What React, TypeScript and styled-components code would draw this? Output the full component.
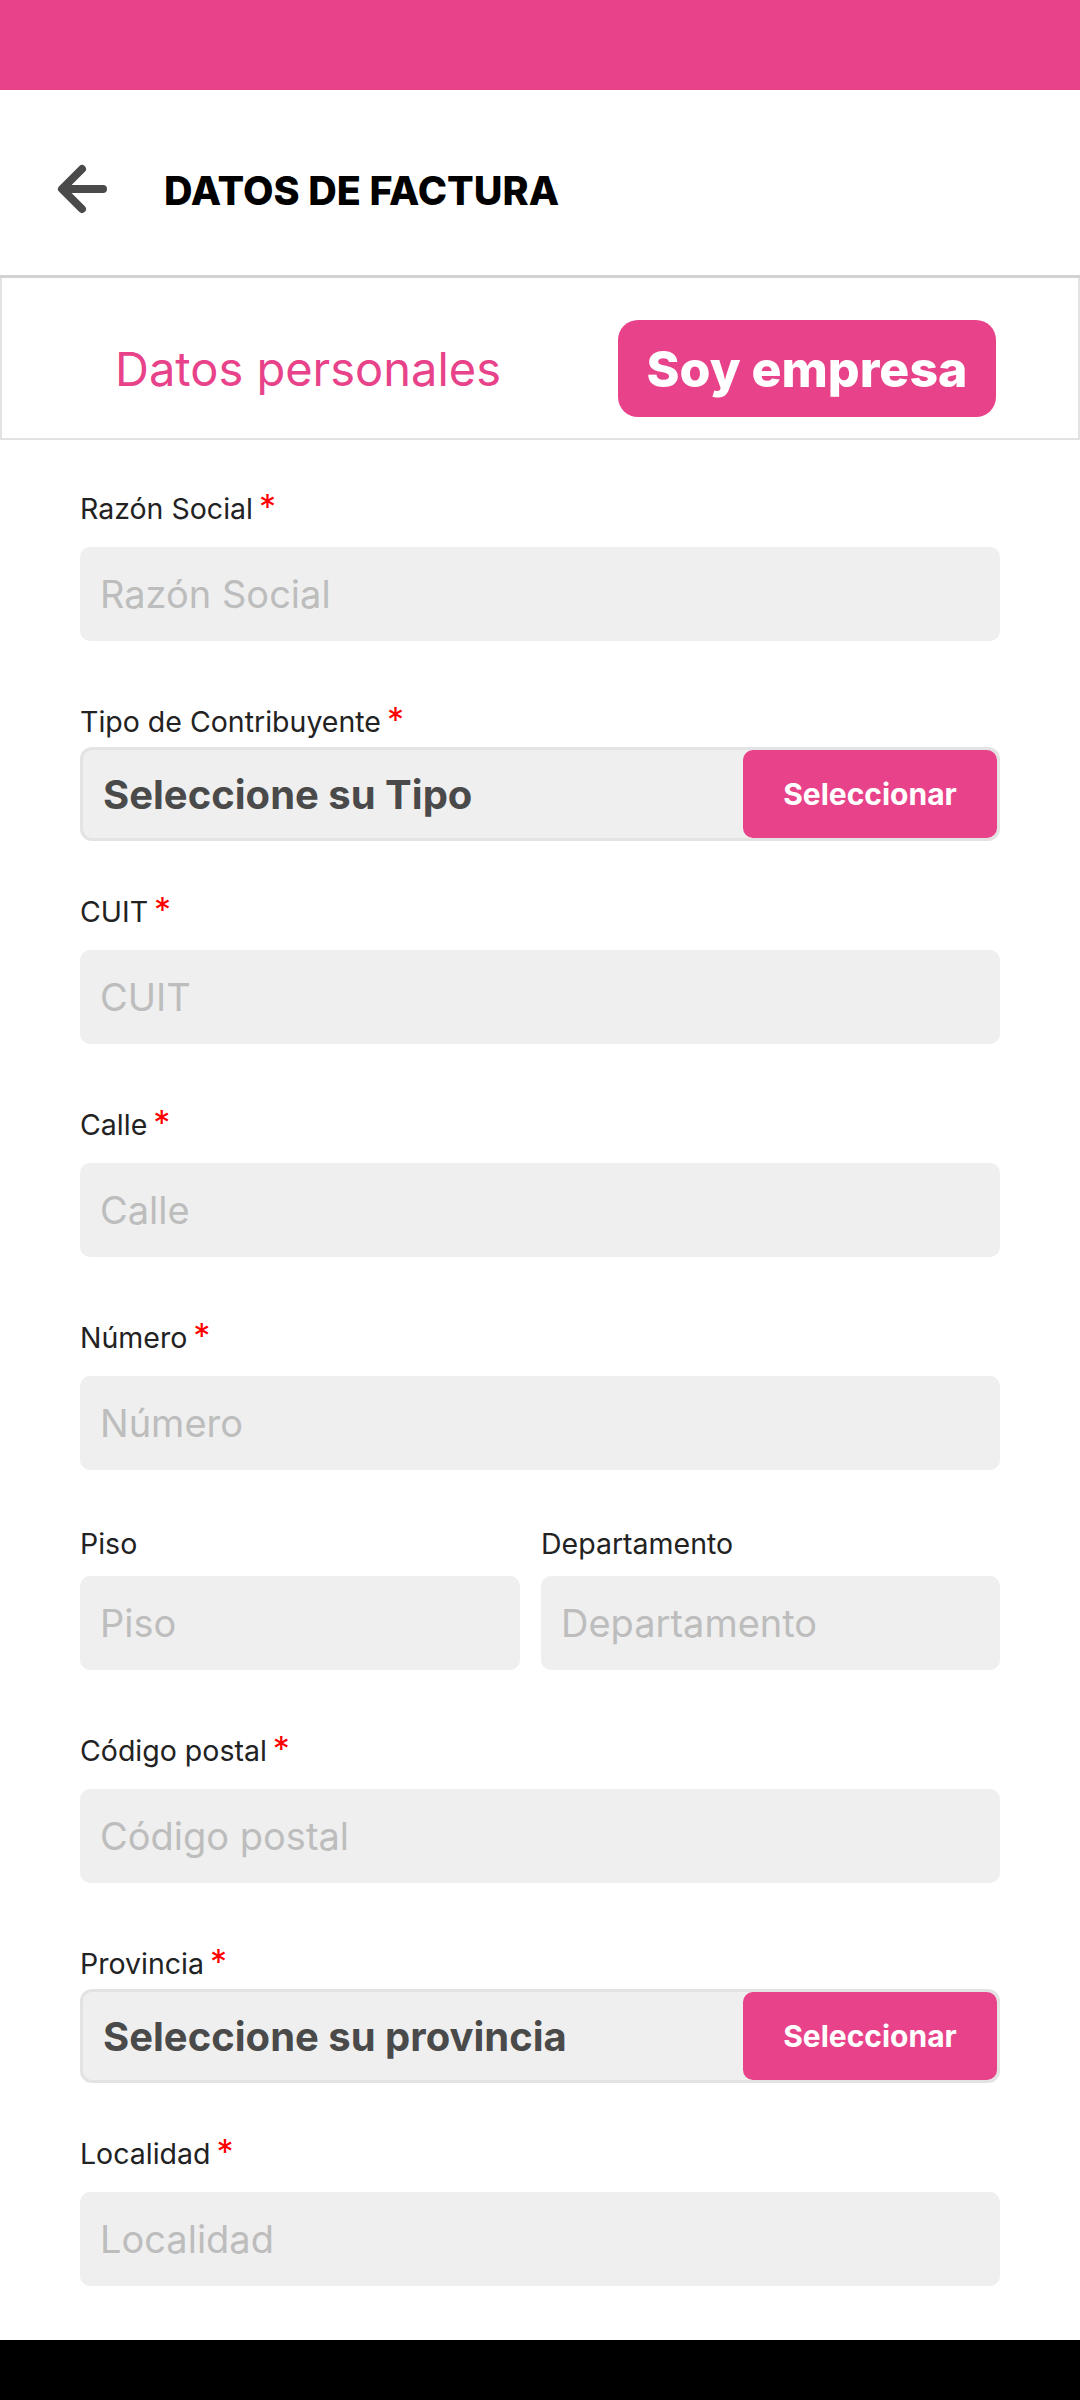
import React from "react";
import styled, { createGlobalStyle } from "styled-components";

const PINK = "#E8438A";

const GlobalStyle = createGlobalStyle`
  html, body {
    margin: 0;
    padding: 0;
    background: #ffffff;
    font-family: Inter, "Open Sans", sans-serif;
  }
  * { box-sizing: border-box; }
  #root { min-height: 100vh; }
`;

const Page = styled.div`
  display: flex;
  flex-direction: column;
  min-height: 100vh;
`;

const StatusBar = styled.div`
  height: 90px;
  background: ${PINK};
  flex-shrink: 0;
`;

const Header = styled.header`
  display: flex;
  align-items: center;
  height: 188px;
  padding: 12px 0 0 56px;
  border-bottom: 3px solid #d2d2d2;
`;

const BackButton = styled.button`
  width: 52px;
  height: 52px;
  padding: 0;
  margin: 0 56px 0 0;
  border: none;
  background: none;
  display: flex;
  align-items: center;
  justify-content: center;
`;

const Title = styled.h1`
  margin: 0;
  padding-top: 5px;
  font-size: 39.5px;
  font-weight: 800;
  color: #000;
`;

const Tabs = styled.div`
  display: flex;
  align-items: stretch;
  height: 162px;
  padding: 42px 0 21px 117px;
  gap: 121px;
  border: 2px solid #e2e2e2;
  border-top: none;
`;

const Tab = styled.button<{ $active?: boolean }>`
  width: 378px;
  border: none;
  border-radius: 20px;
  padding: 0;
  display: flex;
  align-items: center;
  justify-content: center;
  white-space: nowrap;
  font-family: inherit;
  background: ${(p) => (p.$active ? PINK : "transparent")};
  color: ${(p) => (p.$active ? "#ffffff" : PINK)};
  font-size: ${(p) => (p.$active ? "50px" : "47px")};
  font-weight: ${(p) => (p.$active ? 800 : 400)};
`;

const Form = styled.form`
  flex: 1;
  display: flex;
  flex-direction: column;
  gap: 44px;
  padding: 45px 80px 0;
`;

const Field = styled.div`
  display: flex;
  flex-direction: column;
`;

const Row = styled.div`
  display: grid;
  grid-template-columns: 440px 1fr;
  column-gap: 21px;
`;

const Label = styled.label<{ $required?: boolean }>`
  display: block;
  font-size: 28.5px;
  line-height: 34px;
  color: #222;
  white-space: nowrap;
  padding: ${(p) => (p.$required ? "7px 0 6px" : "0")};
`;

const Asterisk = styled.span`
  color: #ff0000;
  font-size: 34px;
  line-height: 0;
  margin-left: 6px;
`;

const TextInput = styled.input`
  width: 100%;
  height: 94px;
  margin: 15px 0 13px;
  border: none;
  border-radius: 10px;
  background: #efefef;
  padding: 0 20px;
  font-family: inherit;
  font-size: 38px;
  color: #333;
  outline: none;
  &::placeholder {
    color: #bdbdbd;
    opacity: 1;
  }
`;

const SelectBox = styled.div`
  display: flex;
  align-items: stretch;
  height: 94px;
  margin: 2px 0 3px;
  border: 3px solid #e3e3e3;
  border-radius: 12px;
  background: #efefef;
  padding-left: 20px;
`;

const SelectText = styled.span`
  flex: 1;
  display: flex;
  align-items: center;
  font-size: 40px;
  font-weight: 700;
  color: #4a4a4a;
  white-space: nowrap;
`;

const SelectButton = styled.button`
  width: 254px;
  border: none;
  border-radius: 10px;
  background: ${PINK};
  color: #fff;
  font-family: inherit;
  font-size: 30px;
  font-weight: 700;
`;

const NavBar = styled.div`
  height: 60px;
  background: #000;
  flex-shrink: 0;
  margin-top: 40px;
`;

type InputFieldProps = { label: string; required?: boolean };

const InputField = ({ label, required }: InputFieldProps) => (
  <Field>
    <Label $required={required}>
      {label}
      {required && <Asterisk>*</Asterisk>}
    </Label>
    <TextInput placeholder={label} />
  </Field>
);

const SelectField = ({ label, text }: { label: string; text: string }) => (
  <Field>
    <Label $required>
      {label}
      <Asterisk>*</Asterisk>
    </Label>
    <SelectBox>
      <SelectText>{text}</SelectText>
      <SelectButton type="button">Seleccionar</SelectButton>
    </SelectBox>
  </Field>
);

const ArrowBack = () => (
  <svg width="52" height="52" viewBox="0 0 52 52" fill="none">
    <path
      d="M47 26H7M26 6L6 26L26 46"
      stroke="#4a4a4a"
      strokeWidth="8"
      strokeLinecap="round"
      strokeLinejoin="round"
    />
  </svg>
);

export default function App() {
  return (
    <>
      <GlobalStyle />
      <Page>
        <StatusBar />
        <Header>
          <BackButton type="button" aria-label="Volver">
            <ArrowBack />
          </BackButton>
          <Title>DATOS DE FACTURA</Title>
        </Header>
        <Tabs>
          <Tab type="button">Datos personales</Tab>
          <Tab type="button" $active>
            Soy empresa
          </Tab>
        </Tabs>
        <Form onSubmit={(e) => e.preventDefault()}>
          <InputField label="Razón Social" required />
          <SelectField label="Tipo de Contribuyente" text="Seleccione su Tipo" />
          <InputField label="CUIT" required />
          <InputField label="Calle" required />
          <InputField label="Número" required />
          <Row>
            <InputField label="Piso" />
            <InputField label="Departamento" />
          </Row>
          <InputField label="Código postal" required />
          <SelectField label="Provincia" text="Seleccione su provincia" />
          <InputField label="Localidad" required />
        </Form>
        <NavBar />
      </Page>
    </>
  );
}
